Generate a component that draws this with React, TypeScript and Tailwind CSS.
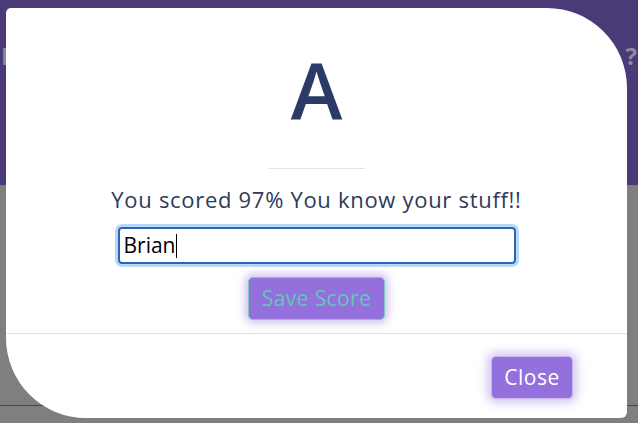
import React from "react";

export default function App() {
  const font = { fontFamily: '"Open Sans", "Noto Sans", sans-serif' };
  return (
    <div className="relative w-[638px] h-[423px] overflow-hidden bg-[#7f7f7f]" style={font}>
      {/* page behind the backdrop */}
      <div className="h-[185px] bg-[#4b3a78] flex items-start justify-between pt-[38px] px-[1px] text-[#8f8a9e] text-[24px] font-bold">
        <span>I</span>
        <span>?</span>
      </div>
      <div className="mt-[220px] h-px bg-[#4b3a78]" />

      {/* modal */}
      <div className="absolute left-[6px] top-[8px] w-[621px] h-[410px] bg-white rounded-tl-[5px] rounded-tr-[80px] rounded-bl-[80px] rounded-br-[6px] flex flex-col">
        <div className="flex flex-col items-center h-[325px]">
          <div className="mt-[36px] text-[78px] leading-[90px] font-semibold text-[#2b3a67]">A</div>
          <div className="mt-[34px] w-[96px] h-px bg-[#e3e3e3]" />
          <div className="mt-[14px] text-[22px] leading-[32px] tracking-[0.7px] text-[#2e3a59]">You scored 97% You know your stuff!!</div>
          <div className="mt-[12px] w-[398px] h-[37px] rounded-[4px] border-2 border-[#2a64b8] shadow-[0_0_0_3px_#b9d7f7] flex items-center px-[4px] text-[21px] text-black">
            <span>Brian</span>
            <span className="w-px h-[24px] bg-black" />
          </div>
          <button className="mt-[13px] w-[137px] h-[43px] rounded-[5px] bg-[#9370db] border border-[#7fc9c0] text-[#5fc9b8] text-[21px] tracking-[0.4px] shadow-[0_0_8px_3px_rgba(147,112,219,0.45)]">
            Save Score
          </button>
        </div>
        <div className="border-t border-[#dee2e6] flex justify-end pt-[22px] pr-[54px]">
          <button className="w-[82px] h-[43px] rounded-[5px] bg-[#9370db] border border-[#c9b5f0] text-white text-[21px] tracking-[0.5px] shadow-[0_0_10px_4px_rgba(147,112,219,0.4)]">
            Close
          </button>
        </div>
      </div>
    </div>
  );
}
